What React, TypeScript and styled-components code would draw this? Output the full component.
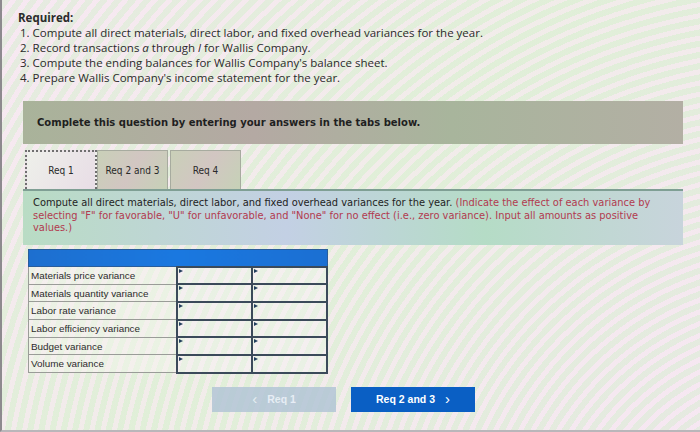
import React from 'react';
import styled, {createGlobalStyle} from 'styled-components';

const Global = createGlobalStyle`
    html, body {
        margin: 0;
        padding: 0;
    }
    body {
        width: 700px;
        height: 432px;
        overflow: hidden;
        font-family: "Open Sans", "Liberation Sans", sans-serif;
    }
`

const Page = styled.div`
    box-sizing: border-box;
    width: 700px;
    height: 432px;
    border-left: 2px solid #8d8a8e;
    border-bottom: 2px solid #b9b6ba;
    padding: 10px 16px 0 16px;
    background:
        repeating-radial-gradient(circle at 115% 135%, rgba(255, 232, 246, 0.45) 0 5px, rgba(218, 238, 208, 0.45) 5px 11px),
        linear-gradient(135deg, #f1e8ef 0%, #e6f0df 50%, #efe6ef 100%);
`

const Required = styled.div`
    font-size: 11.5px;
    line-height: 15px;
    color: #2b2b2b;
`

const Title = styled.div`
    font-weight: 700;
`

const Step = styled.div`
    padding-left: 2px;
    & i {
        font-style: italic;
    }
`

const Notice = styled.div`
    margin: 16px 0 0 5px;
    width: 660px;
    height: 43px;
    display: flex;
    align-items: center;
    padding-left: 14px;
    box-sizing: border-box;
    background: linear-gradient(90deg, #a9b39a 0%, #b4a9a3 35%, #a8b59c 65%, #b3afa4 100%);
    font-family: "DejaVu Sans", Verdana, sans-serif;
    font-weight: 700;
    font-size: 10px;
    color: #1f1f1f;
`

const TabBar = styled.div`
    display: flex;
    margin: 6px 0 0 7px;
    height: 39px;
    align-items: stretch;
`

const Tab = styled.div<{ active?: boolean }>`
    box-sizing: border-box;
    width: ${({active}) => active ? '72px' : '71px'};
    margin-right: ${({active}) => active ? '0' : '2px'};
    display: flex;
    align-items: center;
    justify-content: center;
    font-family: "DejaVu Sans Condensed", "DejaVu Sans", sans-serif;
    font-size: 10px;
    color: #2a2a2a;
    border: ${({active}) => active ? '2px dotted #6f6f6f' : '1px solid #a7ab9f'};
    border-bottom: none;
    background: ${({active}) => active
        ? 'linear-gradient(120deg, #eef0ea, #e8dde6)'
        : 'linear-gradient(120deg, #c9d0b8, #d2c6c2 50%, #c6d1b7)'};
`

const Panel = styled.div`
    margin-left: 5px;
    width: 660px;
    box-sizing: border-box;
    padding: 6px 14px 10px 10px;
    border-top: 2px solid #7f9f94;
    background: linear-gradient(90deg, #b9dcc4 0%, #c3d0e4 40%, #b5dcc6 70%, #c8d4dc 100%);
    font-family: "DejaVu Sans", Verdana, sans-serif;
    font-size: 9.9px;
    line-height: 12.5px;
    color: #232323;
`

const Note = styled.span`
    color: #b23a4f;
`

const Table = styled.table`
    margin: 4px 0 0 10px;
    border-collapse: collapse;
    font-family: "Liberation Sans", Arial, sans-serif;
    font-size: 9.9px;
    color: #2c2c2c;
`

const HeadCell = styled.td`
    height: 16px;
    padding: 0;
    background: linear-gradient(90deg, #1d6fcf, #1a78e0 50%, #1b6fd2);
    border: 1px solid #2a5d9a;
`

const LabelCell = styled.td`
    width: 145px;
    height: 16.7px;
    padding: 0 0 0 2px;
    border: 1px solid #9a9c98;
    background: rgba(246, 246, 240, 0.45);
    white-space: nowrap;
`

const InputCell = styled.td`
    position: relative;
    width: 73px;
    padding: 0;
    border: 2px solid #3b4a5a;
    background: rgba(250, 246, 250, 0.35);
    &:before {
        content: "";
        position: absolute;
        left: 1px;
        top: 1px;
        border-left: 4px solid #24405e;
        border-top: 2.5px solid transparent;
        border-bottom: 2.5px solid transparent;
    }
`

const Nav = styled.div`
    display: flex;
    gap: 15px;
    margin: 13px 0 0 194px;
`

const NavButton = styled.div<{ disabled?: boolean }>`
    width: 124px;
    height: 25px;
    display: flex;
    align-items: center;
    justify-content: center;
    gap: 10px;
    font-family: "Liberation Sans", Arial, sans-serif;
    font-weight: 700;
    font-size: 10.5px;
    color: ${({disabled}) => disabled ? '#e6eef8' : '#ffffff'};
    background: ${({disabled}) => disabled ? '#b3c6d6' : '#0a5fc4'};
    opacity: ${({disabled}) => disabled ? 0.85 : 1};
`

const Chevron = styled.span`
    font-weight: 400;
    font-size: 15px;
    line-height: 1;
    margin-top: -2px;
`

const rows = [
    'Materials price variance',
    'Materials quantity variance',
    'Labor rate variance',
    'Labor efficiency variance',
    'Budget variance',
    'Volume variance',
]

function App() {
    return (
        <Page>
            <Global/>
            <Required>
                <Title>Required:</Title>
                <Step>1. Compute all direct materials, direct labor, and fixed overhead variances for the year.</Step>
                <Step>2. Record transactions <i>a</i> through <i>l</i> for Wallis Company.</Step>
                <Step>3. Compute the ending balances for Wallis Company's balance sheet.</Step>
                <Step>4. Prepare Wallis Company's income statement for the year.</Step>
            </Required>
            <Notice>Complete this question by entering your answers in the tabs below.</Notice>
            <TabBar>
                <Tab active>Req 1</Tab>
                <Tab>Req 2 and 3</Tab>
                <Tab>Req 4</Tab>
            </TabBar>
            <Panel>
                Compute all direct materials, direct labor, and fixed overhead variances for the year.{' '}
                <Note>(Indicate the effect of each variance by selecting "F" for favorable, "U" for unfavorable, and "None" for no effect (i.e., zero variance). Input all amounts as positive values.)</Note>
            </Panel>
            <Table>
                <tbody>
                <tr>
                    <HeadCell colSpan={3}/>
                </tr>
                {rows.map((label) =>
                    <tr key={label}>
                        <LabelCell>{label}</LabelCell>
                        <InputCell/>
                        <InputCell/>
                    </tr>
                )}
                </tbody>
            </Table>
            <Nav>
                <NavButton disabled><Chevron>&lsaquo;</Chevron>Req 1</NavButton>
                <NavButton>Req 2 and 3<Chevron>&rsaquo;</Chevron></NavButton>
            </Nav>
        </Page>
    );
}

export default App;
